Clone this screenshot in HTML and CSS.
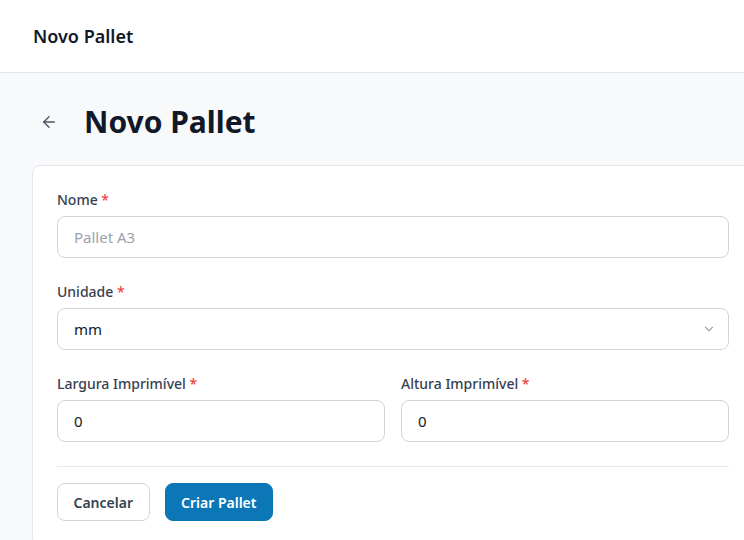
FILE: index.html
```html
<!DOCTYPE html>
<html lang="pt">
<head>
<meta charset="utf-8">
<title>Novo Pallet</title>
<link rel="stylesheet" href="styles.css">
</head>
<body>
<header class="topbar">
  <span class="topbar-title">Novo Pallet</span>
</header>
<main class="page">
  <div class="page-head">
    <button class="back-btn" type="button" aria-label="Voltar">
      <svg width="18" height="18" viewBox="0 0 24 24" fill="none" stroke="currentColor" stroke-width="1.8" stroke-linecap="round" stroke-linejoin="round"><path d="M19 12H5"/><path d="M12 19l-7-7 7-7"/></svg>
    </button>
    <h1 class="page-title">Novo Pallet</h1>
  </div>
  <form class="card">
    <div class="field">
      <label class="label">Nome <span class="req">*</span></label>
      <input class="input" type="text" placeholder="Pallet A3">
    </div>
    <div class="field">
      <label class="label">Unidade <span class="req">*</span></label>
      <div class="select">
        <span>mm</span>
        <svg class="chev" width="14" height="14" viewBox="0 0 24 24" fill="none" stroke="currentColor" stroke-width="2" stroke-linecap="round" stroke-linejoin="round"><path d="M6 9l6 6 6-6"/></svg>
      </div>
    </div>
    <div class="row">
      <div class="field">
        <label class="label">Largura Imprimível <span class="req">*</span></label>
        <input class="input value" type="text" value="0">
      </div>
      <div class="field">
        <label class="label">Altura Imprimível <span class="req">*</span></label>
        <input class="input value" type="text" value="0">
      </div>
    </div>
    <div class="actions">
      <button class="btn btn-outline" type="button">Cancelar</button>
      <button class="btn btn-primary" type="button">Criar Pallet</button>
    </div>
  </form>
</main>
</body>
</html>
```
FILE: styles.css
```css
* { box-sizing: border-box; }
html, body { margin: 0; padding: 0; }
body {
  font-family: "Noto Sans", "Open Sans", sans-serif;
  background: #f8f9fb;
  color: #111827;
  overflow: hidden;
  width: 744px;
  height: 540px;
}
.topbar {
  height: 73px;
  background: #ffffff;
  border-bottom: 1px solid #e5e7eb;
  display: flex;
  align-items: center;
  padding-left: 33px;
}
.topbar-title {
  font-size: 18px;
  font-weight: 600;
  color: #111827;
}
.page {
  padding: 30px 0 0 32px;
}
.page-head {
  display: flex;
  align-items: center;
  gap: 19px;
  margin-bottom: 24px;
  height: 38px;
}
.back-btn {
  width: 32px;
  height: 32px;
  margin-left: 1px;
  border: none;
  background: transparent;
  color: #4b5563;
  display: flex;
  align-items: center;
  justify-content: center;
  padding: 0;
}
.page-title {
  margin: 0;
  font-size: 30px;
  font-weight: 700;
  color: #111827;
  line-height: 36px;
}
.card {
  width: 722px;
  background: #ffffff;
  border: 1px solid #e5e7eb;
  border-radius: 8px;
  padding: 24px 24px 24px;
  display: flex;
  flex-direction: column;
  gap: 24px;
}
.field {
  display: flex;
  flex-direction: column;
  gap: 6px;
  flex: 1;
}
.label {
  font-size: 14px;
  font-weight: 500;
  color: #374151;
  line-height: 20px;
}
.req { color: #ef4444; }
.input, .select {
  height: 42px;
  border: 1px solid #d1d5db;
  border-radius: 8px;
  padding: 0 16px;
  font-family: inherit;
  font-size: 15px;
  color: #111827;
  background: #ffffff;
  width: 100%;
}
.input::placeholder { color: #9ca3af; }
.select {
  display: flex;
  align-items: center;
  justify-content: space-between;
  padding-right: 12px;
}
.chev { color: #9ca3af; }
.row {
  display: flex;
  gap: 16px;
}
.actions {
  border-top: 1px solid #e5e7eb;
  padding-top: 16px;
  display: flex;
  gap: 15px;
  margin-bottom: 0;
}
.btn {
  height: 38px;
  padding: 0 15.5px;
  border-radius: 8px;
  font-family: inherit;
  font-size: 14px;
  font-weight: 600;
}
.btn-outline {
  background: #ffffff;
  border: 1px solid #d1d5db;
  color: #374151;
}
.btn-primary {
  background: #0b77b7;
  border: 1px solid #0b77b7;
  color: #ffffff;
}
```
